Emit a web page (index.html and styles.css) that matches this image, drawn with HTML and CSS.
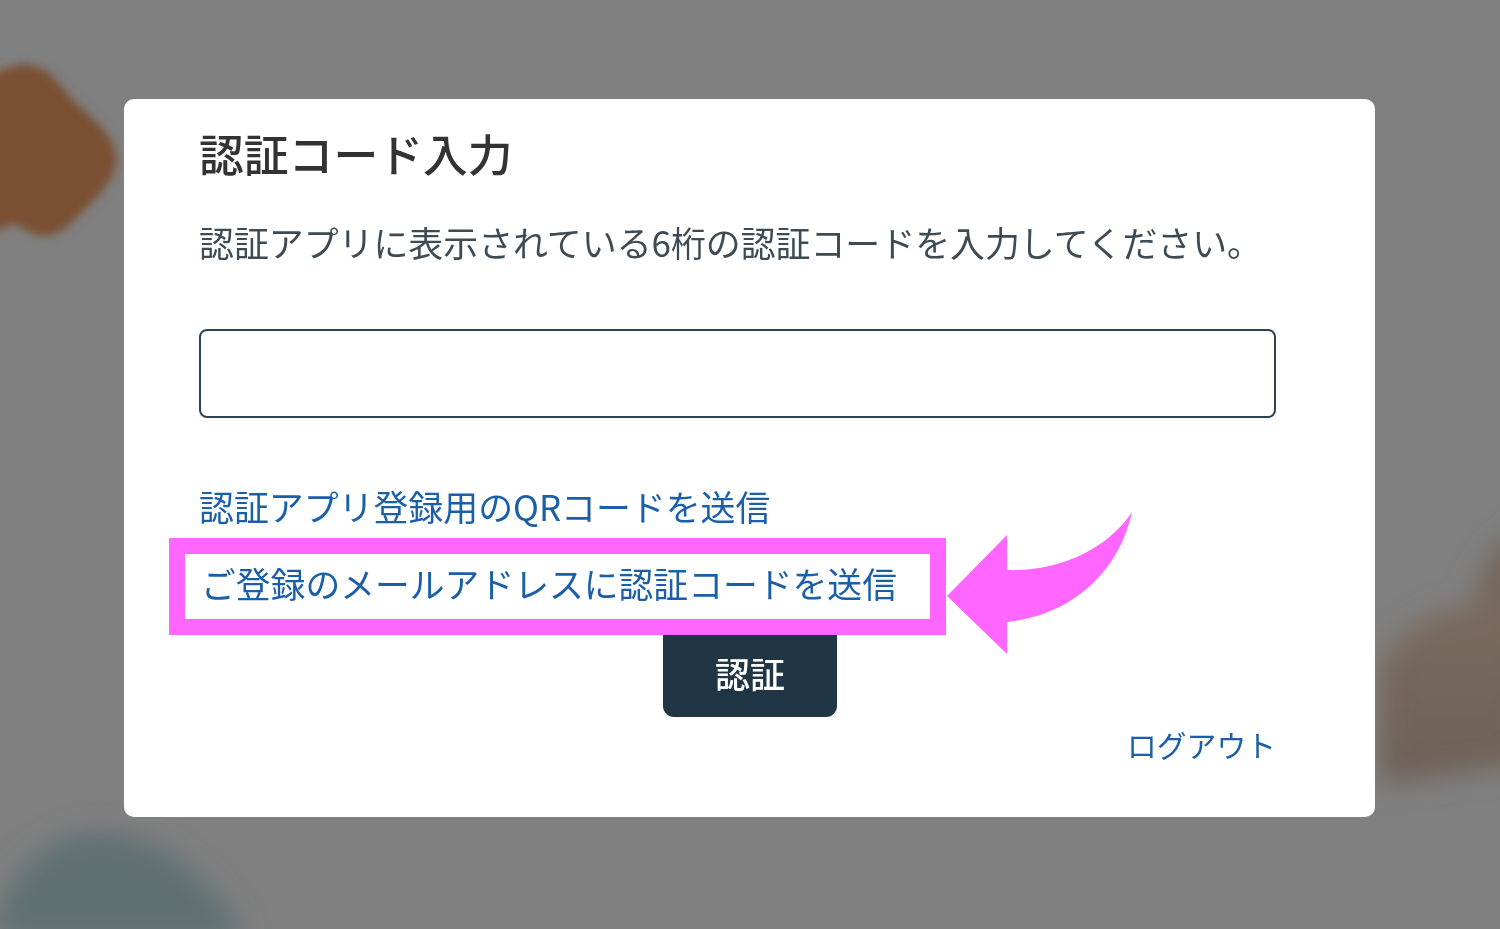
FILE: index.html
```html
<!DOCTYPE html>
<html lang="ja">
<head>
<meta charset="utf-8">
<title>認証コード入力</title>
<link rel="stylesheet" href="styles.css">
</head>
<body>
<svg class="backdrop" viewBox="0 0 1500 929" aria-hidden="true">
  <defs>
    <filter id="soft" x="-30%" y="-30%" width="160%" height="160%"><feGaussianBlur stdDeviation="5"/></filter>
    <filter id="softer" x="-30%" y="-30%" width="160%" height="160%"><feGaussianBlur stdDeviation="14"/></filter>
    <filter id="softest" x="-30%" y="-30%" width="160%" height="160%"><feGaussianBlur stdDeviation="14"/></filter>
    <linearGradient id="brown" x1="0" y1="0" x2="0" y2="1">
      <stop offset="0" stop-color="#6b5f57"/>
      <stop offset="0.35" stop-color="#7a695d"/>
      <stop offset="1" stop-color="#6d6058"/>
    </linearGradient>
  </defs>
  <path class="blob-orange" filter="url(#soft)" d="M-20 86 C-4 68 30 54 52 76 C64 90 76 104 90 116 C110 134 120 150 115 170 C106 192 86 208 68 226 C52 240 34 238 20 226 C10 220 0 230 -20 242 Z"/>
  <path fill="url(#brown)" filter="url(#softer)" d="M1380 665 C1405 628 1440 604 1472 610 C1478 572 1490 548 1530 525 L1530 762 C1470 772 1430 778 1380 784 Z"/>
  <path class="blob-teal" filter="url(#softest)" d="M-5 929 C10 860 60 830 105 832 C165 838 215 880 245 940 L-5 940 Z"/>
</svg>
<main class="modal">
  <h1 class="title"><span class="soft-text">認証コード入力</span></h1>
  <p class="lead"><span class="soft-text">認証アプリに表示されている6桁の認証コードを入力してください。</span></p>
  <input class="code-input" type="text" aria-label="認証コード">
  <div class="links">
    <a class="link" href="#"><span class="soft-text">認証アプリ登録用のQRコードを送信</span></a>
    <div class="highlight-row">
      <a class="link highlight" href="#"><span class="soft-text">ご登録のメールアドレスに認証コードを送信</span></a>
      <svg class="arrow" viewBox="0 0 186 144" aria-hidden="true">
        <path d="M0 84 L60 23 L60 58 C110 60 160 38 185 0 C172 60 125 103 60 110 L60 142 Z"/>
      </svg>
    </div>
  </div>
  <div class="actions"><button class="submit" type="button"><span class="soft-text">認証</span></button></div>
  <div class="logout-row"><a class="logout" href="#"><span class="soft-text">ログアウト</span></a></div>
</main>
</body>
</html>
```
FILE: styles.css
```css
* { box-sizing: border-box; }
html, body { margin: 0; height: 929px; overflow: hidden; }
body {
  position: relative;
  background: #808080;
  padding: 99px 125px 0 124px;
  font-family: "Noto Sans CJK JP", "Noto Sans", sans-serif;
}
.backdrop { position: absolute; inset: 0; width: 1500px; height: 929px; }
.blob-orange { fill: #7a4f30; }
.blob-teal { fill: #5f7072; }
.modal {
  position: relative;
  width: 1251px;
  height: 718px;
  background: #fff;
  border-radius: 10px;
  padding: 22px 99px 0 75px;
  display: flex;
  flex-direction: column;
}
.soft-text { display: inline-block; filter: blur(0.7px); }
.title { margin: 0; font-size: 44.8px; line-height: 64px; font-weight: 500; color: #333; }
.lead { margin: 31px 0 0; font-size: 34.9px; line-height: 52px; color: #3d4b55; white-space: nowrap; }
.code-input {
  display: block;
  width: 100%;
  height: 89px;
  margin-top: 61px;
  border: 2px solid #2b4353;
  border-radius: 8px;
  background: #fff;
}
.links { margin-top: 62px; display: flex; flex-direction: column; }
.link { font-size: 34.9px; line-height: 52px; color: #1b5fa8; text-decoration: none; white-space: nowrap; }
.highlight-row { display: flex; align-items: center; margin: 6px 0 0 -30px; height: 97px; position: relative; }
.highlight {
  display: block;
  width: 777px;
  height: 97px;
  border: 16px solid #ff66ff;
  background: #fff;
  padding: 0 0 0 16px;
  line-height: 58px;
}
.highlight .soft-text { font-size: 34.8px; }
.arrow { position: absolute; left: 777.5px; top: -26px; width: 186px; height: 144px; fill: #ff66ff; }
.actions { display: flex; justify-content: center; margin: -2px 0 0 25px; }
.submit {
  width: 174px;
  height: 84px;
  background: #203644;
  color: #fff;
  border: 0;
  border-radius: 0 0 11px 11px;
  font-family: inherit;
  font-size: 35px;
  font-weight: 500;
  padding: 0 0 4px;
  line-height: 52px;
}
.logout-row { display: flex; justify-content: flex-end; margin-top: 5px; }
.logout { font-size: 29.8px; line-height: 44px; color: #1b5fa8; text-decoration: none; }
```
